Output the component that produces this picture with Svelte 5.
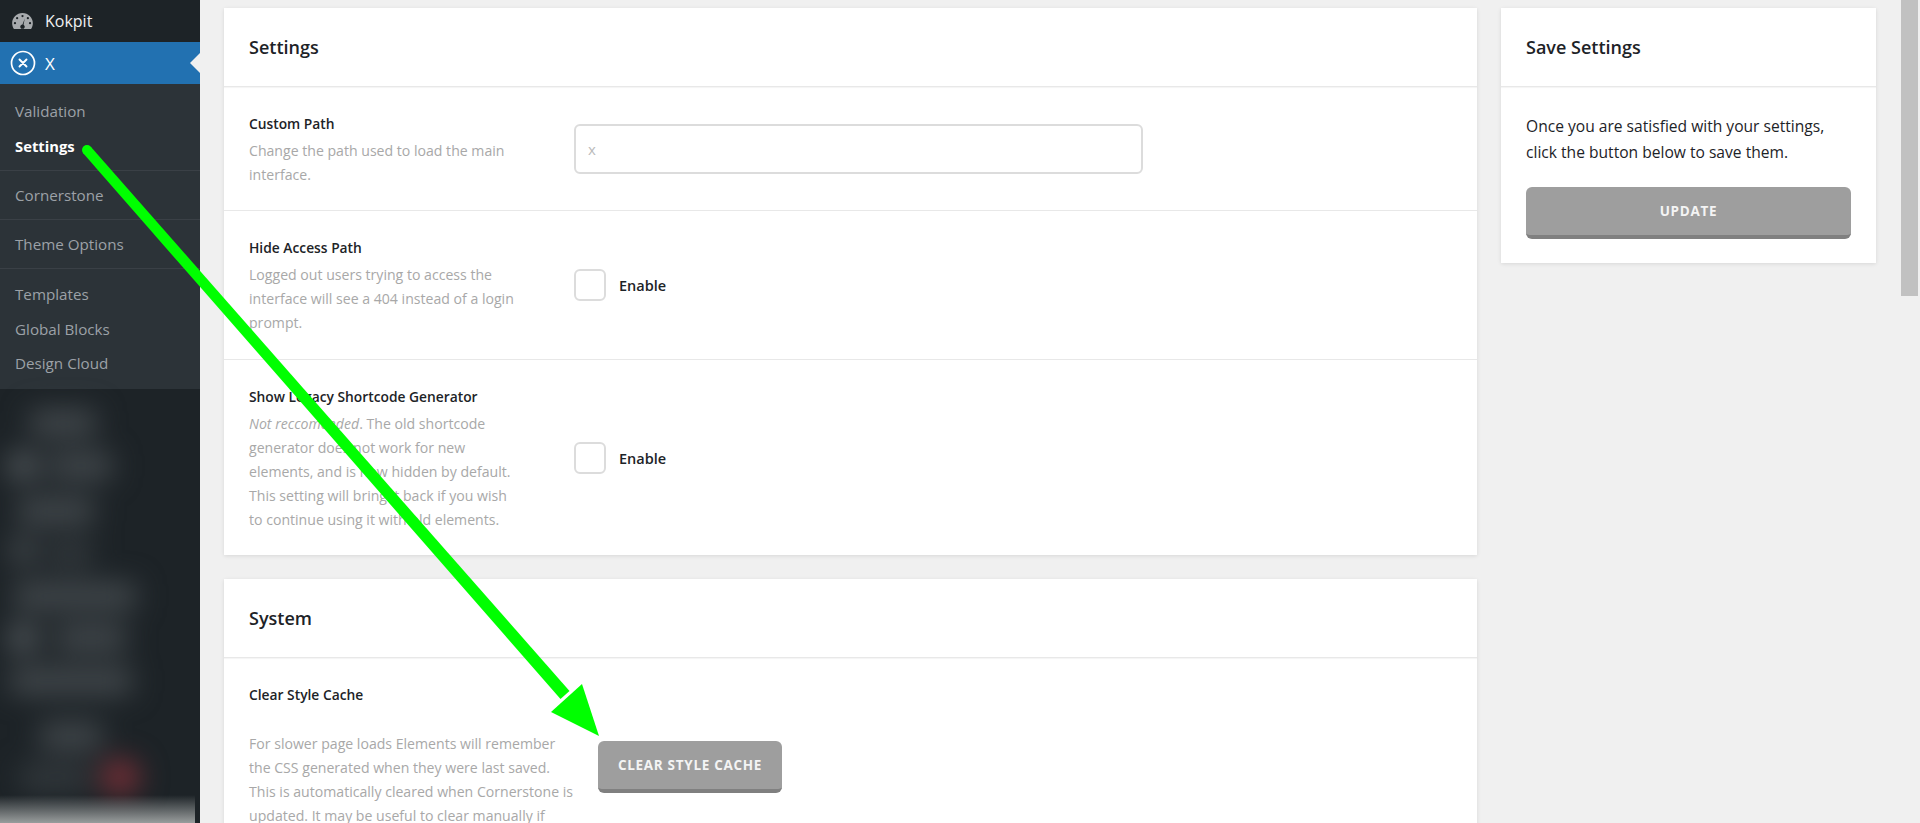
<script lang="ts">
  // y is the centre of each blurred menu entry
  const blurred = [
    { y: 422, left: 30, width: 66, bright: 1 },
    { y: 465, left: 8, width: 30, bright: 2 },
    { y: 465, left: 50, width: 62, bright: 1 },
    { y: 510, left: 18, width: 76, bright: 1 },
    { y: 550, left: 10, width: 26, bright: 1 },
    { y: 553, left: 48, width: 44, bright: 0 },
    { y: 595, left: 14, width: 122, bright: 1 },
    { y: 637, left: 8, width: 30, bright: 2 },
    { y: 637, left: 56, width: 70, bright: 1 },
    { y: 680, left: 10, width: 122, bright: 1 },
    { y: 735, left: 40, width: 62, bright: 1 },
    { y: 777, left: 20, width: 70, bright: 0 },
  ];
</script>

<div class="page">
  <aside class="sidebar">
    <a class="top-item">
      <svg class="gauge" viewBox="0 0 22 17" width="21" height="16">
        <path fill="#a7aaad" fill-rule="evenodd" d="M11 0C5 0 0 4.800 0 10.800c0 2.300.7 4.400 1.900 6.200h18.200c1.200-1.800 1.900-3.900 1.900-6.200C22 4.800 17 0 11 0zM11 2a1.200 1.200 0 1 1 0 2.400A1.200 1.200 0 0 1 11 2zM5.300 4.300a1.200 1.200 0 1 1 0 2.400 1.200 1.200 0 0 1 0-2.400zm11.400 0a1.200 1.200 0 1 1 0 2.400 1.200 1.200 0 0 1 0-2.400zM3 9.600A1.200 1.200 0 1 1 3 12a1.200 1.200 0 0 1 0-2.400zm16 0a1.200 1.200 0 1 1 0 2.400 1.200 1.200 0 0 1 0-2.400zM13.400 5.800l-1.300 6.700c.8.500 1.300 1.300 1.300 2.200 0 .8-.4 1.500-1 2H9.600c-.6-.5-1-1.200-1-2 0-1.400 1.100-2.500 2.400-2.600z"/>
      </svg>
      <span>Kokpit</span>
    </a>
    <a class="top-item current">
      <svg viewBox="0 0 26 26" width="26" height="26">
        <circle cx="13" cy="13" r="11.500" fill="none" stroke="#fff" stroke-width="1.700"/>
        <path d="M9.500 9.500l7 7M16.500 9.500l-7 7" stroke="#fff" stroke-width="1.900" stroke-linecap="round"/>
      </svg>
      <span>X</span>
      <i class="notch"></i>
    </a>
    <nav class="submenu">
      <a class="sub" style="margin-top: 10px">Validation</a>
      <a class="sub active">Settings</a>
      <div class="sep"></div>
      <a class="sub solo">Cornerstone</a>
      <div class="sep"></div>
      <a class="sub solo">Theme Options</a>
      <div class="sep"></div>
      <a class="sub" style="margin-top: 8px">Templates</a>
      <a class="sub">Global Blocks</a>
      <a class="sub">Design Cloud</a>
    </nav>
    <div class="blur-menu">
      {#each blurred as b}
        <span class="blob b{b.bright}" style="top:{b.y - 389 - 12}px;left:{b.left}px;width:{b.width}px"></span>
      {/each}
      <span class="blob red"></span>
    </div>
    <div class="bottom-fade"></div>
  </aside>

  <main class="content">
    <div class="col-main">
      <section class="panel">
        <h2>Settings</h2>
        <div class="row">
          <div class="info">
            <h3>Custom Path</h3>
            <p>Change the path used to load the main interface.</p>
          </div>
          <div class="control"><input type="text" placeholder="x" /></div>
        </div>
        <div class="row roomy">
          <div class="info">
            <h3>Hide Access Path</h3>
            <p>Logged out users trying to access the interface will see a 404 instead of a login prompt.</p>
          </div>
          <div class="control"><span class="check"></span><label>Enable</label></div>
        </div>
        <div class="row">
          <div class="info">
            <h3>Show Legacy Shortcode Generator</h3>
            <p><em>Not reccomended</em>. The old shortcode generator does not work for new elements, and is now hidden by default. This setting will bring it back if you wish to continue using it with old elements.</p>
          </div>
          <div class="control"><span class="check"></span><label>Enable</label></div>
        </div>
      </section>

      <section class="panel">
        <h2>System</h2>
        <div class="row tall">
          <div class="info wide">
            <h3>Clear Style Cache</h3>
            <p>For slower page loads Elements will remember the CSS generated when they were last saved. This is automatically cleared when Cornerstone is updated. It may be useful to clear manually if</p>
          </div>
          <div class="control near"><button class="btn cache">CLEAR STYLE CACHE</button></div>
        </div>
      </section>
    </div>

    <div class="col-side">
      <section class="panel">
        <h2>Save Settings</h2>
        <div class="save-body">
          <p>Once you are satisfied with your settings, click the button below to save them.</p>
          <button class="btn update">UPDATE</button>
        </div>
      </section>
    </div>
  </main>

  <div class="scroll-thumb"></div>

  <svg class="arrow" viewBox="0 0 1920 823" width="1920" height="823">
    <circle cx="87" cy="150" r="5" fill="#00ff00"/>
    <polygon points="90.800,146.700 569.500,691 560.500,699 83.200,153.300" fill="#00ff00"/>
    <polygon points="582,684 551,712 599,736" fill="#00ff00"/>
  </svg>
</div>

<style>
  :global(body) {
    margin: 0;
    background: #f0f0f0;
  }

  .page {
    position: relative;
    display: flex;
    height: 823px;
    overflow: hidden;
    font-family: "Open Sans", "Noto Sans", sans-serif;
    color: #1d2327;
  }

  .sidebar {
    position: relative;
    flex: 0 0 200px;
    background: #1d2327;
    display: flex;
    flex-direction: column;
    overflow: hidden;
  }

  .top-item {
    position: relative;
    height: 42px;
    display: flex;
    align-items: center;
    padding-left: 12px;
    gap: 12px;
    font-size: 16px;
    color: #f0f0f1;
  }

  .top-item.current {
    background: #2271b1;
    color: #fff;
    padding-left: 10px;
    gap: 9px;
    font-size: 17px;
  }

  .notch {
    position: absolute;
    right: 0;
    top: 11px;
    border: 10px solid transparent;
    border-right-color: #f0f0f0;
    border-left: 0;
  }

  .submenu {
    background: #2c3338;
    height: 305px;
    display: flex;
    flex-direction: column;
  }

  .sub {
    height: 34.500px;
    line-height: 34.500px;
    padding-left: 15px;
    font-size: 15.200px;
    color: #9ca1a7;
  }

  .sub.active {
    color: #fff;
    font-size: 14.800px;
    font-weight: 700;
  }

  .sub.solo {
    height: 48px;
    line-height: 48px;
  }

  .sep {
    height: 1px;
    background: #3a4046;
    flex: none;
  }

  .sub.active + .sep {
    margin-top: 7px;
  }

  .blur-menu {
    position: relative;
    flex: 1;
    filter: blur(14px);
  }

  .blob {
    position: absolute;
    height: 26px;
    border-radius: 4px;
  }

  .b0 { background: #33393d; }
  .b1 { background: #43494d; }
  .b2 { background: #52585c; }

  .red {
    top: 370px;
    left: 100px;
    width: 40px;
    height: 36px;
    border-radius: 50%;
    background: #762f37;
  }

  .bottom-fade {
    position: absolute;
    left: 0;
    bottom: 0;
    width: 195px;
    height: 28px;
    background: linear-gradient(to bottom, rgba(150, 155, 155, 0), #999d9d);
  }

  .content {
    flex: 1;
    display: flex;
    align-items: flex-start;
    gap: 24px;
    padding: 8px 0 0 24px;
  }

  .col-main {
    flex: 0 0 1253px;
    display: flex;
    flex-direction: column;
    gap: 24px;
  }

  .col-side {
    flex: 0 0 374px;
  }

  .panel {
    background: #fff;
    box-shadow: 0 1px 4px rgba(0, 0, 0, 0.1);
  }

  h2 {
    margin: 0;
    height: 78px;
    line-height: 78px;
    padding-left: 25px;
    font-size: 18px;
    font-weight: 600;
    color: #1d2327;
    border-bottom: 1px solid #e8e8e8;
    box-shadow: 0 1px 1px rgba(0, 0, 0, 0.04);
  }

  .row {
    display: flex;
    padding: 24px 25px 23px;
    border-bottom: 1px solid #e8e8e8;
  }

  .row.roomy {
    padding-bottom: 24px;
  }

  .row:last-child {
    border-bottom: 0;
  }

  .info {
    flex: 0 0 270px;
    margin-right: 55px;
  }

  .info.wide {
    flex: 0 0 326px;
    margin-right: 23px;
  }

  .info.wide p {
    margin-top: 24px;
  }

  h3 {
    margin: 0 0 2px;
    font-size: 13.800px;
    line-height: 26px;
    font-weight: 600;
    color: #1d2327;
  }

  .info p {
    margin: 0;
    font-size: 14.100px;
    line-height: 24px;
    color: #a8a8a8;
  }

  .control {
    flex: 1;
    display: flex;
    align-items: center;
  }

  .control.near {
    align-items: flex-start;
    padding-top: 59px;
  }

  input {
    width: 569px;
    height: 50px;
    box-sizing: border-box;
    border: 2px solid #dcdcdc;
    border-radius: 6px;
    padding: 0 12px;
    font-family: inherit;
    font-size: 15px;
    outline: none;
  }

  input::placeholder {
    color: #bbb;
  }

  .check {
    width: 32px;
    height: 32px;
    box-sizing: border-box;
    border: 2px solid #dcdcdc;
    border-radius: 6px;
  }

  label {
    margin-left: 13px;
    font-size: 14.500px;
    font-weight: 600;
  }

  .btn {
    display: block;
    height: 52px;
    box-sizing: border-box;
    border: 0;
    border-bottom: 4px solid #808080;
    border-radius: 6px;
    background: #9e9e9e;
    color: #f4f4f4;
    font-family: inherit;
    font-size: 13.500px;
    font-weight: 700;
    letter-spacing: 0.7px;
  }

  .cache {
    width: 184px;
  }

  .save-body {
    padding: 26px 25px 24px;
  }

  .save-body p {
    margin: 0 0 22px;
    font-size: 15.600px;
    line-height: 26px;
    color: #1d2327;
  }

  .update {
    width: 325px;
  }

  .scroll-thumb {
    position: absolute;
    left: 1901px;
    top: 0;
    width: 17px;
    height: 296px;
    background: #c1c1c1;
  }

  .arrow {
    position: absolute;
    left: 0;
    top: 0;
    pointer-events: none;
  }
</style>
